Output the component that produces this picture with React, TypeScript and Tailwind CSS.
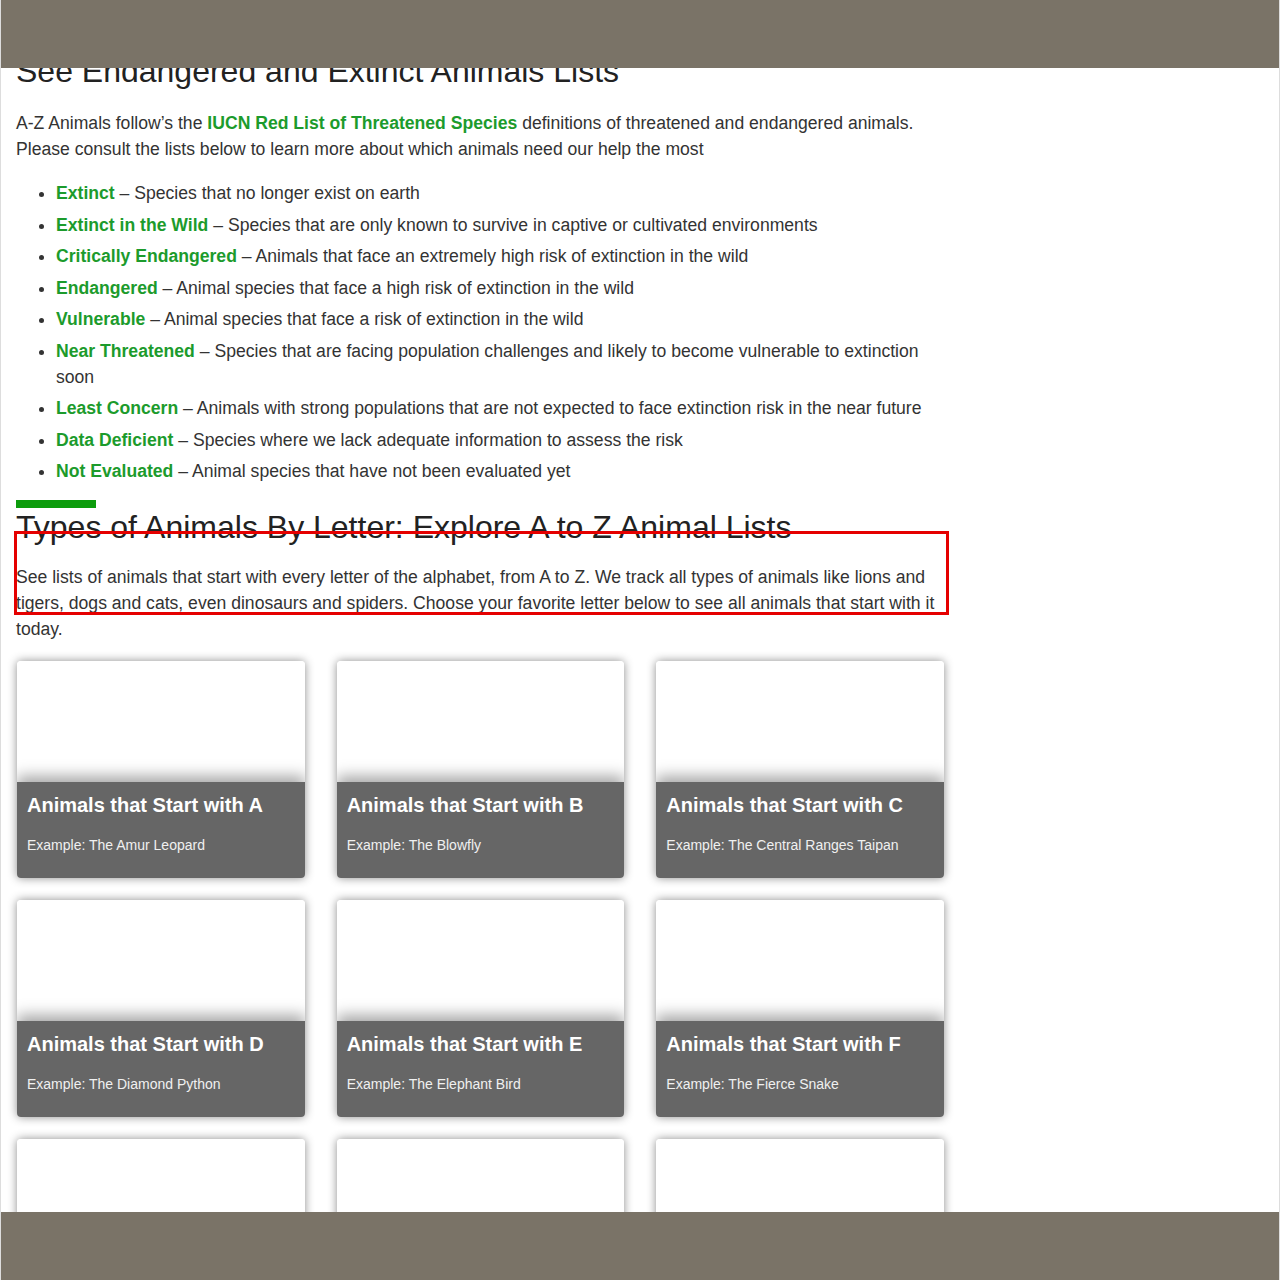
import React from "react";

const statuses = [
    { name: "Extinct", text: "Species that no longer exist on earth" },
    { name: "Extinct in the Wild", text: "Species that are only known to survive in captive or cultivated environments" },
    { name: "Critically Endangered", text: "Animals that face an extremely high risk of extinction in the wild" },
    { name: "Endangered", text: "Animal species that face a high risk of extinction in the wild" },
    { name: "Vulnerable", text: "Animal species that face a risk of extinction in the wild" },
    { name: "Near Threatened", text: "Species that are facing population challenges and likely to become vulnerable to extinction soon" },
    { name: "Least Concern", text: "Animals with strong populations that are not expected to face extinction risk in the near future" },
    { name: "Data Deficient", text: "Species where we lack adequate information to assess the risk" },
    { name: "Not Evaluated", text: "Animal species that have not been evaluated yet" },
];

const letters = [
    { letter: "A", example: "The Amur Leopard" },
    { letter: "B", example: "The Blowfly" },
    { letter: "C", example: "The Central Ranges Taipan" },
    { letter: "D", example: "The Diamond Python" },
    { letter: "E", example: "The Elephant Bird" },
    { letter: "F", example: "The Fierce Snake" },
    { letter: "G", example: "" },
    { letter: "H", example: "" },
    { letter: "I", example: "" },
];

const LetterCard: React.FC<{ letter: string; example: string }> = ({ letter, example }) => (
    <div className="h-[217px] rounded-[4px] bg-white shadow-[0_0_10px_rgba(0,0,0,0.45)] overflow-hidden flex flex-col">
        <div className="h-[121px] bg-white" />
        <div className="flex-1 bg-[#666666] px-[10px] pt-[9px] shadow-[0_-6px_14px_rgba(0,0,0,0.35)]">
            <h3 className="text-[20px] leading-[28px] font-bold text-white">Animals that Start with {letter}</h3>
            <p className="mt-[16px] text-[14px] leading-[20px] text-[#f0f0f0]">Example: {example}</p>
        </div>
    </div>
);

const App: React.FC = () => {
    return (
        <div className="relative h-[1280px] overflow-hidden bg-white border-x border-[#dddddd] font-['Liberation_Sans',Arial,sans-serif] text-[#333333]">
            {/* page body */}
            <div className="w-[943px] pl-[15px] pt-[52px]">
                <h2 className="text-[32px] leading-[38px] text-[#222222]">See Endangered and Extinct Animals Lists</h2>

                <p className="mt-[20px] text-[17.6px] leading-[26px]">
                    A-Z Animals follow’s the{" "}
                    <a className="font-bold text-[#1c9b2c]">IUCN Red List of Threatened Species</a>{" "}
                    definitions of threatened and endangered animals. Please consult the lists below to learn more about which animals need our help the most
                </p>

                <ul className="mt-[18px] pl-[40px] list-disc text-[17.6px] leading-[26px]">
                    {statuses.map((s) => (
                        <li key={s.name} className="mb-[5.5px]">
                            <a className="font-bold text-[#1c9b2c]">{s.name}</a> – {s.text}
                        </li>
                    ))}
                </ul>

                <div className="mt-[16px] w-[80px] h-[8px] bg-[#0c9c0c]" />
                <h2 className="text-[32px] leading-[38px] text-[#222222]">
                    Types of Animals By Letter: Explore A to Z Animal Lists
                </h2>

                <p className="mt-[18px] text-[17.6px] leading-[26px]">
                    See lists of animals that start with every letter of the alphabet, from A to Z. We track all types of animals like lions and tigers, dogs and cats, even dinosaurs and spiders. Choose your favorite letter below to see all animals that start with it today.
                </p>

                <div className="mt-[19px] grid grid-cols-3 gap-x-[32px] gap-y-[22px] pl-[1px]">
                    {letters.map((l) => (
                        <LetterCard key={l.letter} letter={l.letter} example={l.example} />
                    ))}
                </div>
            </div>

            {/* highlight box */}
            <div className="absolute left-[13px] top-[531px] w-[935px] h-[84px] border-[3px] border-[#e50000]" />

            {/* top and bottom bars */}
            <div className="absolute left-0 top-0 w-full h-[68px] bg-[#7a7367]" />
            <div className="absolute left-0 top-[1212px] w-full h-[68px] bg-[#7a7367]" />
        </div>
    );
};

export default App;
